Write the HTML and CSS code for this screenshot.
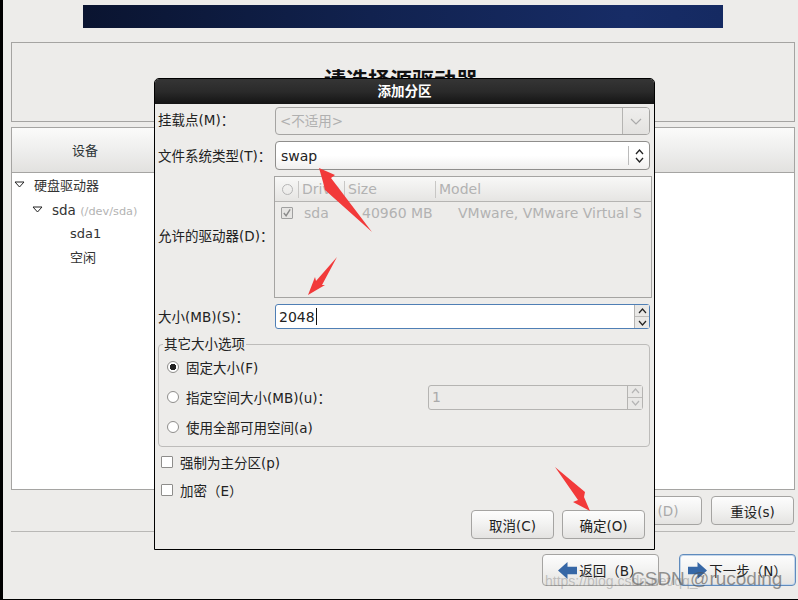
FILE: index.html
```html
<!DOCTYPE html>
<html lang="zh">
<head>
<meta charset="utf-8">
<title>添加分区</title>
<link rel="stylesheet" href="styles.css">
</head>
<body>
<div class="screen">
  <div class="banner"></div>
  <div class="title-box"><h1>请选择源驱动器</h1></div>
  <div class="device-box">
    <div class="device-head"><span class="device-col">设备</span></div>
    <div class="tree">
      <div class="tree-row lvl0"><svg class="exp" viewBox="0 0 11 7"><path d="M1 1h9L5.500 6z"/></svg>硬盘驱动器</div>
      <div class="tree-row lvl1"><svg class="exp" viewBox="0 0 11 7"><path d="M1 1h9L5.500 6z"/></svg>sda <small>(/dev/sda)</small></div>
      <div class="tree-row lvl2">sda1</div>
      <div class="tree-row lvl2">空闲</div>
    </div>
  </div>
  <div class="action-row">
    <button class="btn btn-off">(D)</button>
    <button class="btn btn-reset">重设(s)</button>
  </div>
  <div class="rule"></div>
  <div class="nav-row">
    <button class="btn btn-nav"><svg class="nav-arrow" viewBox="0 0 20 20"><path d="M0 10 10 1v5h10v8H10v5z"/></svg>返回（B）</button>
    <button class="btn btn-nav btn-focus"><svg class="nav-arrow" viewBox="0 0 20 20"><path d="M20 10 10 1v5H0v8h10v5z"/></svg>下一步（N）</button>
  </div>
</div>

<div class="dialog">
  <div class="dialog-title">添加分区</div>
  <div class="dialog-body">
    <div class="row row-mount">
      <label class="lbl">挂载点(M)：</label>
      <div class="combo combo-off"><span class="combo-text">&lt;不适用&gt;</span>
        <span class="combo-drop"><svg viewBox="0 0 12 7"><path d="M1 1l5 5 5-5"/></svg></span></div>
    </div>
    <div class="row row-type">
      <label class="lbl">文件系统类型(T)：</label>
      <div class="combo combo-on"><span class="combo-text">swap</span>
        <span class="combo-updown"><svg viewBox="0 0 9 14"><path d="M1 5l3.500-4L8 5M1 9l3.500 4L8 9"/></svg></span></div>
    </div>
    <div class="row row-drives">
      <label class="lbl">允许的驱动器(D)：</label>
      <div class="drives">
        <div class="drives-head">
          <span class="dh dh-radio"><i class="mini-radio"></i></span>
          <span class="dh dh-drive">Drive</span>
          <span class="dh dh-size">Size</span>
          <span class="dh dh-model">Model</span>
        </div>
        <div class="drives-row">
          <span class="check check-off"><svg viewBox="0 0 11 11"><path d="M2 5.500l2.500 3L9 1.500"/></svg></span>
          <span class="cell-drive">sda</span>
          <span class="cell-size">40960 MB</span>
          <span class="cell-model">VMware, VMware Virtual S</span>
        </div>
      </div>
    </div>
    <div class="row row-size">
      <label class="lbl">大小(MB)(S)：</label>
      <div class="spin-main"><span class="spin-text">2048</span><i class="caret"></i>
        <span class="spin-btns">
          <span class="spin-btn"><svg viewBox="0 0 9 6"><path d="M1 5l3.500-4L8 5"/></svg></span>
          <span class="spin-btn"><svg viewBox="0 0 9 6"><path d="M1 1l3.500 4L8 1"/></svg></span>
        </span>
      </div>
    </div>
    <fieldset class="options">
      <legend>其它大小选项</legend>
      <div class="opt"><i class="radio radio-on"></i>固定大小(F)</div>
      <div class="opt"><i class="radio"></i>指定空间大小(MB)(u)：
        <div class="spin-off"><span>1</span>
          <span class="spin-btns">
            <span class="spin-btn"><svg viewBox="0 0 9 6"><path d="M1 5l3.500-4L8 5"/></svg></span>
            <span class="spin-btn"><svg viewBox="0 0 9 6"><path d="M1 1l3.500 4L8 1"/></svg></span>
          </span>
        </div>
      </div>
      <div class="opt"><i class="radio"></i>使用全部可用空间(a)</div>
    </fieldset>
    <div class="chk-row chk-first"><i class="check"></i>强制为主分区(p)</div>
    <div class="chk-row"><i class="check"></i>加密（E）</div>
    <div class="dialog-actions">
      <button class="btn btn-dlg">取消(C)</button>
      <button class="btn btn-dlg">确定(O)</button>
    </div>
  </div>
</div>

<svg class="marks" viewBox="0 0 798 600">
  <path d="M319 168 335 175 331 178 372 232 325 190 323 182z"/>
  <path d="M337 257 322 285 325 285 308 295 315 277 316 281z"/>
  <path d="M555 467 585 492 584 497 590 511 573 502 578 500z"/>
</svg>
<div class="wm-url">https://blog.csdn.net/qq_</div>
<div class="wm-name">CSDN @rucoding</div>
</body>
</html>
```
FILE: styles.css
```css
* { box-sizing: border-box; }
html, body { margin: 0; padding: 0; }
body {
  position: relative;
  width: 798px;
  height: 600px;
  overflow: hidden;
  background: #edecea;
  font-family: "DejaVu Sans", "Noto Sans CJK SC", sans-serif;
  font-size: 13px;
  color: #2e3436;
}
.screen {
  width: 798px;
  height: 600px;
  border-left: 3px solid #000;
  border-bottom: 1px solid #000;
  padding: 5px 3px 0 8px;
}
.banner {
  width: 640px;
  height: 23px;
  margin-left: 72px;
  background: linear-gradient(90deg, #0a1430 0%, #11224f 45%, #172c66 85%, #152a62 100%);
}
.title-box {
  height: 80px;
  margin-top: 14px;
  border: 1px solid #a5a4a2;
  text-align: center;
  overflow: hidden;
}
.title-box h1 {
  margin: 24px 4px 0 0;
  font-size: 22px;
  line-height: 28px;
  font-weight: bold;
  color: #111;
}
.device-box {
  height: 363px;
  margin-top: 5px;
  border: 1px solid #a5a4a2;
  background: #fff;
}
.device-head {
  height: 45px;
  border-bottom: 1px solid #a5a4a2;
  background: linear-gradient(#fbfbfa, #ededec 55%, #e2e1df);
  padding-left: 60px;
  line-height: 46px;
}
.tree { padding-top: 1px; }
.tree-row { height: 24px; line-height: 24px; color: #333; white-space: nowrap; }
.tree-row small { font-size: 11.300px; color: #b3b3b3; }
.lvl0 { padding-left: 2px; }
.lvl1 { padding-left: 20px; font-size: 13.500px; }
.lvl2 { padding-left: 58px; }
.exp { width: 11px; height: 7px; margin-right: 9px; vertical-align: 2px; fill: #fff; stroke: #222; stroke-width: 1; }
.action-row {
  display: flex;
  justify-content: flex-end;
  gap: 9px;
  margin-top: 6px;
  padding-right: 1px;
}
.btn {
  font: inherit;
  font-size: 13.500px;
  color: #222;
  border: 1px solid #a5a4a2;
  border-radius: 4px;
  background: linear-gradient(#fdfdfd, #f3f3f2 45%, #e4e3e1);
  padding: 0;
}
.btn-off { width: 92px; height: 29px; color: #a9a9a9; padding-left: 24px; }
.btn-reset { width: 83px; height: 29px; }
.rule { height: 1px; margin-top: 6px; background: #b9b8b6; }
.nav-row {
  display: flex;
  justify-content: flex-end;
  gap: 20px;
  margin-top: 22px;
  margin-right: -1px;
}
.btn-nav {
  display: flex;
  align-items: center;
  justify-content: center;
  width: 117px;
  height: 32px;
  gap: 2px;
}
.btn-focus { border-color: #5f8bbd; box-shadow: inset 0 0 0 1px #c4d6ea; }
.nav-arrow { width: 19px; height: 19px; fill: #3667a6; }

.dialog {
  position: absolute;
  left: 154px;
  top: 78px;
  width: 501px;
  height: 472px;
  background: #edecea;
  border: 1px solid #000;
  border-top-left-radius: 5px;
  border-top-right-radius: 5px;
  display: flex;
  flex-direction: column;
  font-size: 13.500px;
}
.dialog-title {
  height: 25px;
  flex: none;
  background: linear-gradient(#353535, #2a2a2a 50%, #141414);
  border-top-left-radius: 4px;
  border-top-right-radius: 4px;
  color: #fff;
  font-weight: bold;
  font-size: 13.500px;
  line-height: 24px;
  text-align: center;
}
.dialog-body { flex: 1; padding: 3px 4px 0 3px; }
.row { display: flex; }
.lbl { width: 117px; flex: none; padding-bottom: 2px; white-space: nowrap; color: #222; align-self: center; }
.row-mount .lbl, .row-drives .lbl { padding-bottom: 4px; }
.row-mount { height: 28px; }
.row-type { height: 29px; margin-top: 6px; }
.row-drives { height: 122px; margin-top: 6px; }
.row-size { height: 25px; margin-top: 6px; }
.combo {
  flex: 1;
  display: flex;
  align-items: center;
  border: 1px solid #a5a4a2;
  border-radius: 4px;
  padding-left: 4px;
}
.combo-off { background: #ecebe9; color: #b0b0b0; }
.combo-off .combo-text { padding-bottom: 3px; }
.combo-on { background: linear-gradient(#fff, #fff 50%, #f0efee); border-color: #8f8e8c; color: #222; padding-left: 5px; font-size: 14px; }
.combo-text { flex: 1; }
.combo-drop {
  width: 27px;
  height: 100%;
  border-left: 1px solid #b5b4b2;
  display: flex;
  align-items: center;
  justify-content: center;
  background: linear-gradient(#efeeed, #e3e2e0);
  border-radius: 0 3px 3px 0;
}
.combo-drop svg { width: 12px; height: 7px; fill: none; stroke: #aaa; stroke-width: 1.200; }
.combo-updown {
  width: 21px;
  height: 19px;
  border-left: 1px solid #bbb;
  display: flex;
  align-items: center;
  justify-content: center;
}
.combo-updown svg { width: 9px; height: 14px; fill: none; stroke: #222; stroke-width: 1.300; }
.drives {
  width: 378px;
  flex: none;
  border: 1px solid #a5a4a2;
  background: #edecea;
  color: #b2b2b2;
  margin-left: -1px;
  font-size: 14px;
}
.drives-head {
  height: 25px;
  display: flex;
  align-items: center;
  border-bottom: 1px solid #b5b4b2;
  background: linear-gradient(#f8f8f7, #e6e5e3);
}
.dh { height: 17px; line-height: 17px; border-right: 1px solid #c8c7c5; padding-left: 3px; white-space: nowrap; overflow: hidden; }
.dh-radio { width: 24px; padding-left: 7px; }
.dh-drive { width: 46px; }
.dh-size { width: 91px; }
.dh-model { border-right: 0; }
.mini-radio { display: inline-block; width: 11px; height: 11px; border: 1px solid #b5b5b5; border-radius: 50%; vertical-align: -1px; }
.drives-row { display: flex; align-items: center; height: 22px; white-space: nowrap; }
.check {
  display: inline-block;
  width: 12px;
  height: 12px;
  flex: none;
  border: 1px solid #8e8d8b;
  border-radius: 1px;
  background: #fff;
}
.check-off { margin-left: 6px; background: #e6e5e3; border-color: #a0a0a0; display: flex; }
.check-off svg { width: 10px; height: 10px; fill: none; stroke: #8a8a8a; stroke-width: 1.500; }
.cell-drive { margin-left: 11px; width: 58px; }
.cell-size { width: 96px; }
.spin-main {
  flex: 1;
  display: flex;
  align-items: center;
  padding-left: 3px;
  border: 1px solid #4f7fb5;
  border-radius: 3px;
  background: #fff;
  color: #222;
  font-size: 14px;
}
.caret { width: 1px; height: 17px; background: #111; margin-left: 1px; }
.spin-btns {
  margin-left: auto;
  width: 15px;
  height: 100%;
  display: flex;
  flex-direction: column;
  border-left: 1px solid #b5b4b2;
  background: #e9e8e6;
}
.spin-btn { flex: 1; display: flex; align-items: center; justify-content: center; }
.spin-btn + .spin-btn { border-top: 1px solid #bdbcba; }
.spin-btn svg { width: 9px; height: 6px; fill: none; stroke: #222; stroke-width: 1.200; }
.options {
  margin: 9px 0 0 0;
  height: 109px;
  width: 492px;
  padding: 2px 6px 0 8px;
  border: 1px solid #bdbcba;
  border-radius: 4px;
}
.options legend { padding: 0 1px; margin-left: -4px; line-height: 12px; color: #222; }
.opt { display: flex; align-items: center; height: 30px; color: #222; white-space: nowrap; }
.radio {
  width: 12px;
  height: 12px;
  flex: none;
  margin-right: 7px;
  border: 1px solid #8e8d8b;
  border-radius: 50%;
  background: #fff;
}
.radio-on { background: radial-gradient(circle, #222 0 3px, #fff 3.500px); }
.spin-off {
  margin-left: auto;
  width: 215px;
  height: 25px;
  display: flex;
  align-items: center;
  padding-left: 3px;
  border: 1px solid #b5b4b2;
  border-radius: 3px;
  background: #ecebe9;
  color: #aaa;
  font-size: 14px;
}
.spin-off .spin-btn svg { stroke: #b5b5b5; }
.chk-row { display: flex; align-items: center; height: 28px; gap: 7px; padding-left: 3px; color: #222; }
.chk-first { margin-top: 1px; }
.dialog-actions { display: flex; justify-content: flex-end; gap: 8px; margin-top: 6px; padding-right: 5px; }
.btn-dlg { width: 83px; height: 29px; }

.marks { position: absolute; left: 0; top: 0; width: 798px; height: 600px; fill: #f23a3a; pointer-events: none; }
.wm-url {
  position: absolute;
  left: 545px;
  top: 573px;
  font-family: "Liberation Sans", sans-serif;
  font-size: 14px;
  color: rgba(120,120,120,.4);
  white-space: nowrap;
}
.wm-name {
  position: absolute;
  left: 631px;
  top: 568px;
  font-family: "Liberation Sans", sans-serif;
  font-size: 19px;
  color: rgba(80,80,80,.6);
  white-space: nowrap;
}
```
